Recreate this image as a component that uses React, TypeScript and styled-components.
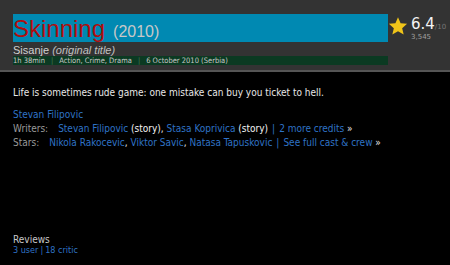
import React from "react";
import styled, { createGlobalStyle } from "styled-components";

const GlobalStyle = createGlobalStyle`
  html, body {
    margin: 0;
    padding: 0;
    background: #000;
  }
  body {
    font-family: "DejaVu Sans Condensed", "DejaVu Sans", Verdana, sans-serif;
    font-stretch: condensed;
  }
`;

const Page = styled.div`
  width: 450px;
  height: 265px;
  background: #000;
  display: flex;
  flex-direction: column;
`;

const Header = styled.header`
  background: #333333;
  border-bottom: 2px solid #555555;
  height: 72px;
  padding: 14px 0 0 13px;
  box-sizing: border-box;
  display: flex;
  align-items: flex-start;
`;

const TitleCol = styled.div`
  width: 375px;
  display: flex;
  flex-direction: column;
`;

const TitleBar = styled.h1`
  margin: 0;
  height: 28px;
  background: #0089b2;
  display: flex;
  align-items: baseline;
  font-family: "Liberation Sans", Arial, sans-serif;
  font-stretch: normal;
  font-weight: normal;
  line-height: 30px;
`;

const Title = styled.span`
  color: #b00d0d;
  font-size: 24px;
`;

const Year = styled.span`
  color: #c8c8c8;
  font-size: 16px;
  margin-left: 8px;
`;

const OrigTitle = styled.div`
  font-family: "Liberation Sans", Arial, sans-serif;
  font-stretch: normal;
  font-size: 11px;
  color: #d0d0d0;
  line-height: 12px;
  margin-top: 2px;
  em {
    color: #c0c0c0;
  }
`;

const InfoBar = styled.div`
  background: #0b3a22;
  height: 9px;
  display: flex;
  align-items: center;
  font-size: 7.5px;
  color: #c8c8c8;
  line-height: 9px;
  white-space: nowrap;
`;

const Sep = styled.span`
  color: #4a7a5a;
  margin: 0 6px;
`;

const Rating = styled.div`
  display: flex;
  align-items: flex-start;
  padding-top: 2px;
`;

const Score = styled.div`
  display: flex;
  flex-direction: column;
  margin-left: 3px;
  padding-top: 1px;
  line-height: 1;
`;

const Big = styled.span`
  color: #f4f4f4;
  font-size: 15px;
  font-family: "DejaVu Sans", Verdana, sans-serif;
  font-stretch: normal;
  small {
    color: #777;
    font-size: 7px;
  }
`;

const Votes = styled.span`
  color: #a0a0a0;
  font-size: 7px;
  margin-top: 2px;
  font-family: "DejaVu Sans", Verdana, sans-serif;
  font-stretch: normal;
`;

const Body = styled.main`
  flex: 1;
  padding: 14px 13px 0;
  font-size: 10px;
  color: #e8e8e8;
  line-height: 14px;
`;

const Plot = styled.p`
  margin: 0 0 8px;
`;

const Line = styled.div`
  white-space: nowrap;
`;

const Label = styled.span`
  color: #9a9a9a;
  margin-right: 10px;
`;

const Story = styled.span`
  color: #f4f4f4;
`;

const A = styled.a`
  color: #2f73c6;
  text-decoration: none;
`;

const Pipe = styled.span<{ $tight?: boolean }>`
  color: #2f73c6;
  margin: ${(p) => (p.$tight ? "0 2px" : "0 4px")};
`;

const Reviews = styled.div`
  margin-top: 84px;
  line-height: 11px;
`;

const ReviewsTitle = styled.div`
  color: #c8c8c8;
  font-size: 10px;
`;

const ReviewLinks = styled.div`
  font-size: 9px;
`;

const Star = () => (
  <svg width="20" height="20" viewBox="0 0 24 24">
    <path
      fill="#f0c419"
      d="M12 1.5l3.1 7.2 7.8.7-5.9 5.2 1.8 7.7L12 18.2l-6.8 4.1 1.8-7.7-5.9-5.2 7.8-.7z"
    />
  </svg>
);

export default function App() {
  return (
    <>
      <GlobalStyle />
      <Page>
        <Header>
          <TitleCol>
            <TitleBar>
              <Title>Skinning</Title>
              <Year>(2010)</Year>
            </TitleBar>
            <OrigTitle>
              Sisanje <em>(original title)</em>
            </OrigTitle>
            <InfoBar>
              1h 38min<Sep>|</Sep>Action, Crime, Drama<Sep>|</Sep>6 October 2010 (Serbia)
            </InfoBar>
          </TitleCol>
          <Rating>
            <Star />
            <Score>
              <Big>
                6.4<small>/10</small>
              </Big>
              <Votes>3,545</Votes>
            </Score>
          </Rating>
        </Header>
        <Body>
          <Plot>Life is sometimes rude game: one mistake can buy you ticket to hell.</Plot>
          <Line>
            <A href="#">Stevan Filipovic</A>
          </Line>
          <Line>
            <Label>Writers:</Label>
            <A href="#">Stevan Filipovic</A> <Story>(story)</Story>, <A href="#">Stasa Koprivica</A>{" "}
            <Story>(story)</Story>
            <Pipe>|</Pipe>
            <A href="#">2 more credits</A> »
          </Line>
          <Line>
            <Label>Stars:</Label>
            <A href="#">Nikola Rakocevic</A>, <A href="#">Viktor Savic</A>,{" "}
            <A href="#">Natasa Tapuskovic</A>
            <Pipe>|</Pipe>
            <A href="#">See full cast &amp; crew</A> »
          </Line>
          <Reviews>
            <ReviewsTitle>Reviews</ReviewsTitle>
            <ReviewLinks>
              <A href="#">3 user</A>
              <Pipe $tight>|</Pipe>
              <A href="#">18 critic</A>
            </ReviewLinks>
          </Reviews>
        </Body>
      </Page>
    </>
  );
}
